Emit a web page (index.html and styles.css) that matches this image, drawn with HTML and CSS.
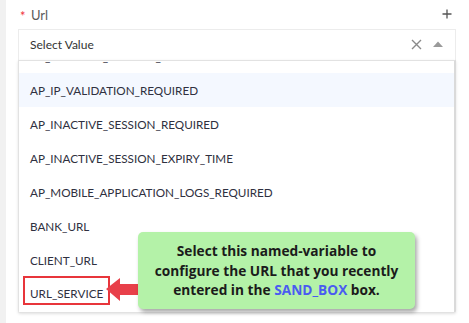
FILE: index.html
```html
<!DOCTYPE html>
<html>
<head>
<meta charset="utf-8">
<link rel="stylesheet" href="styles.css">
</head>
<body>
<div class="page">
  <div class="gutter"></div>
  <div class="main">
    <div class="label-row">
      <span class="req">*</span>
      <span class="label">Url</span>
      <svg class="plus" width="10" height="10" viewBox="0 0 10 10"><path d="M5 0.5V9.5M0.5 5H9.5" stroke="#555" stroke-width="1.3"/></svg>
    </div>
    <div class="select">
      <span class="placeholder">Select Value</span>
      <svg class="clear" width="11" height="11" viewBox="0 0 11 11"><path d="M1 1L10 10M10 1L1 10" stroke="#8a8a8a" stroke-width="1.4"/></svg>
      <svg class="caret" width="10" height="6" viewBox="0 0 10 6"><path d="M0 6L5 0.5L10 6Z" fill="#9a9a9a"/></svg>
    </div>
    <div class="list">
      <div class="items">
        <div class="item">AP_INACTIVE_SESSION_ENABLED</div>
        <div class="item active">AP_IP_VALIDATION_REQUIRED</div>
        <div class="item">AP_INACTIVE_SESSION_REQUIRED</div>
        <div class="item">AP_INACTIVE_SESSION_EXPIRY_TIME</div>
        <div class="item">AP_MOBILE_APPLICATION_LOGS_REQUIRED</div>
        <div class="item">BANK_URL</div>
        <div class="item">CLIENT_URL</div>
        <div class="item"><span class="marked">URL_SERVICE</span></div>
      </div>
    </div>
  </div>
  <svg class="arrow" width="36" height="26" viewBox="0 0 36 26"><path d="M1 12L15 1V7H35V18H15V24Z" fill="#e8404a"/></svg>
  <div class="callout">Select this named-variable to<br>configure the URL that you recently<br>entered in the <span class="var">SAND_BOX</span> box.</div>
</div>
</body>
</html>
```
FILE: styles.css
```css
* { box-sizing: border-box; }
html, body { margin: 0; padding: 0; background: #fff; }
body { font-family: Lato, "Open Sans", sans-serif; }
.page {
  position: relative;
  display: flex;
  width: 469px;
  height: 323px;
  overflow: hidden;
}
.gutter { width: 6px; background: #f1f1f1; flex: none; }
.main { flex: 1; padding: 6px 13px 0 12px; }
.label-row {
  display: flex;
  align-items: center;
  height: 17px;
  padding-left: 2px;
}
.req { color: #f0323c; font-size: 13px; width: 11px; line-height: 17px; padding-top: 3px; }
.label { color: #5a5a5a; font-size: 13px; flex: 1; }
.plus { margin-right: 4px; margin-top: -2px; }
.select {
  margin-top: 6px;
  height: 31px;
  border: 1px solid #ececec;
  border-bottom: none;
  display: flex;
  align-items: center;
  padding: 0 12px 1px 11px;
}
.placeholder { flex: 1; font-size: 12px; color: #333; }
.clear { margin-right: 11px; }
.caret { margin-top: -2px; }
.list {
  height: 253px;
  border: 1px solid #e2e2e2;
  border-right: 2px solid #dadada;
  overflow: hidden;
  box-shadow: 0 1px 3px rgba(0,0,0,0.12);
  border-radius: 0 0 2px 2px;
}
.items { margin-top: -22px; }
.item {
  height: 34px;
  display: flex;
  align-items: center;
  padding-left: 11px;
  font-size: 11.7px;
  color: #2f3040;
}
.item.active { background: #f4f8ff; }
.marked {
  border: 2px solid #e8353b;
  padding: 9px 5px 3px 5px;
  margin-left: -7px;
  margin-top: -7px;
  line-height: 13px;
}
.arrow { position: absolute; left: 105px; top: 277px; }
.callout {
  position: absolute;
  left: 138px;
  top: 232px;
  width: 277px;
  height: 77px;
  background: #b4f2a8;
  border-radius: 5px;
  box-shadow: 2px 3px 4px rgba(0,0,0,0.35);
  text-align: center;
  font-family: "Open Sans", sans-serif;
  font-weight: 700;
  font-size: 13.7px;
  line-height: 19.5px;
  padding-top: 9px;
  color: #1b1b1b;
}
.var { color: #4a5cf0; }
```
